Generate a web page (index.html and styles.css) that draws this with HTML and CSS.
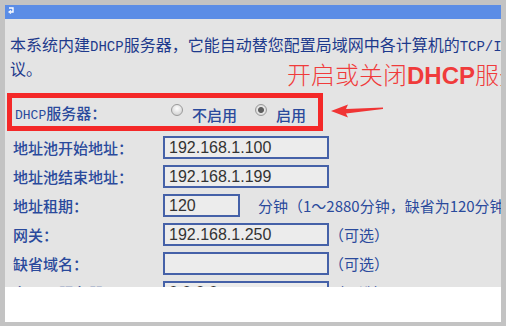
FILE: index.html
```html
<!DOCTYPE html>
<html lang="zh-CN">
<head>
    <meta charset="UTF-8">
    <title>DHCP服务</title>
    <link rel="stylesheet" href="styles.css">
</head>
<body>
    <div class="window">
        <div class="titlebar">
            <svg class="title-icon" width="6" height="8" viewBox="0 0 6 8">
                <path d="M1 1 H5 V5 H2" fill="none" stroke="#fff" stroke-width="1.4"/>
                <path d="M3 3.5 L1 5 L3 6.5" fill="none" stroke="#fff" stroke-width="1.2"/>
            </svg>
        </div>

        <div class="panel">
            <div class="intro">
                <div class="line">本系统内建<span class="en">DHCP</span>服务器，它能自动替您配置局域网中各计算机的<span class="en">TCP/IP</span>协</div>
                <div class="line">议。</div>
            </div>

            <div class="note">开启或关闭<b>DHCP</b>服务器</div>

            <div class="switch-box">
                <span class="switch-label"><span class="en">DHCP</span>服务器：</span>
                <label class="radio"><span class="dot"></span>不启用</label>
                <label class="radio"><span class="dot on"></span>启用</label>
            </div>

            <svg class="arrow" width="54" height="14" viewBox="0 0 54 14">
                <path d="M0 7 L17 0.5 L15 5 L52 3.5 L52 5 L15 9.5 L17 13.5 Z" fill="#f03434"/>
            </svg>

            <div class="rows">
                <span class="label">地址池开始地址：</span>
                <div class="field"><span class="input wide">192.168.1.100</span></div>

                <span class="label">地址池结束地址：</span>
                <div class="field"><span class="input wide">192.168.1.199</span></div>

                <span class="label">地址租期：</span>
                <div class="field"><span class="input short">120</span><span class="hint spaced">分钟（1～2880分钟，缺省为120分钟）</span></div>

                <span class="label">网关：</span>
                <div class="field"><span class="input wide">192.168.1.250</span><span class="hint">（可选）</span></div>

                <span class="label">缺省域名：</span>
                <div class="field"><span class="input wide"></span><span class="hint">（可选）</span></div>

                <span class="label">主DNS服务器：</span>
                <div class="field"><span class="input wide">0.0.0.0</span><span class="hint">（可选）</span></div>
            </div>
        </div>

        <div class="footer"></div>
    </div>
</body>
</html>
```

FILE: styles.css
```css
body {
    margin: 0;
    background-color: #c3c3c3;
    font-family: "Noto Sans CJK SC", sans-serif;
}

.window {
    padding: 5px 5px 4px 5px;
}

.titlebar {
    height: 14px;
    background-color: #5b8de6;
    padding-left: 3px;
}

.title-icon {
    display: block;
    padding-top: 2px;
}

.panel {
    position: relative;
    height: 268px;
    overflow: hidden;
    background-color: #e4e4e4;
    padding: 0 0 0 2px;
    box-sizing: border-box;
}

.intro {
    margin: 13px 0 0 3px;
    font-size: 16px;
    color: #1e3a8c;
}

.line {
    height: 24px;
    line-height: 24px;
    white-space: nowrap;
    overflow: hidden;
}

.en {
    font-family: "Liberation Mono", monospace;
    font-size: 14px;
    line-height: 1;
}

.note {
    position: absolute;
    left: 282px;
    top: 43px;
    font-size: 24px;
    line-height: 24px;
    font-weight: 300;
    color: #f03b3b;
    white-space: nowrap;
}

.note b {
    font-family: "Liberation Sans", sans-serif;
    font-weight: bold;
}

.switch-box {
    display: flex;
    align-items: center;
    width: 316px;
    height: 38px;
    margin-top: 13px;
    border: 5px solid #f42828;
    box-sizing: border-box;
    padding-left: 3px;
    font-size: 15px;
    font-weight: 500;
    color: #2a4a9c;
    white-space: nowrap;
}

.switch-box .en {
    font-size: 13px;
    font-weight: normal;
}

.switch-label {
    width: 156px;
    flex-shrink: 0;
}

.radio {
    display: flex;
    align-items: center;
    gap: 9px;
    margin-right: 18px;
    padding-top: 5px;
    flex-shrink: 0;
}

.dot {
    width: 12px;
    height: 12px;
    border-radius: 50%;
    border: 1px solid #9a9a9a;
    background: radial-gradient(circle at 50% 35%, #ffffff, #c8c8c8);
    box-sizing: border-box;
    margin-top: -9px;
}

.dot.on {
    background: radial-gradient(circle, #5e5e5e 0, #5e5e5e 2.5px, #e6e6e6 3.5px, #c8c8c8 100%);
}

.arrow {
    position: absolute;
    left: 326px;
    top: 85px;
}

.rows {
    display: grid;
    grid-template-columns: 150px auto;
    grid-auto-rows: 23px;
    row-gap: 6px;
    margin-top: 5px;
    padding-left: 6px;
}

.label {
    font-size: 15px;
    font-weight: 500;
    line-height: 23px;
    color: #2a4a9c;
    white-space: nowrap;
}

.field {
    display: flex;
    align-items: center;
    white-space: nowrap;
}

.input {
    height: 23px;
    border: 2px solid #4561a8;
    background-color: #ececec;
    box-sizing: border-box;
    padding-left: 4px;
    font-family: "Liberation Sans", sans-serif;
    font-size: 16px;
    line-height: 19px;
    color: #333;
    flex-shrink: 0;
}

.input.wide {
    width: 166px;
}

.input.short {
    width: 77px;
}

.hint {
    font-size: 15px;
    color: #2a4a9c;
}

.hint.spaced {
    margin-left: 18px;
}

.footer {
    height: 35px;
    background-color: #fff;
}
```
